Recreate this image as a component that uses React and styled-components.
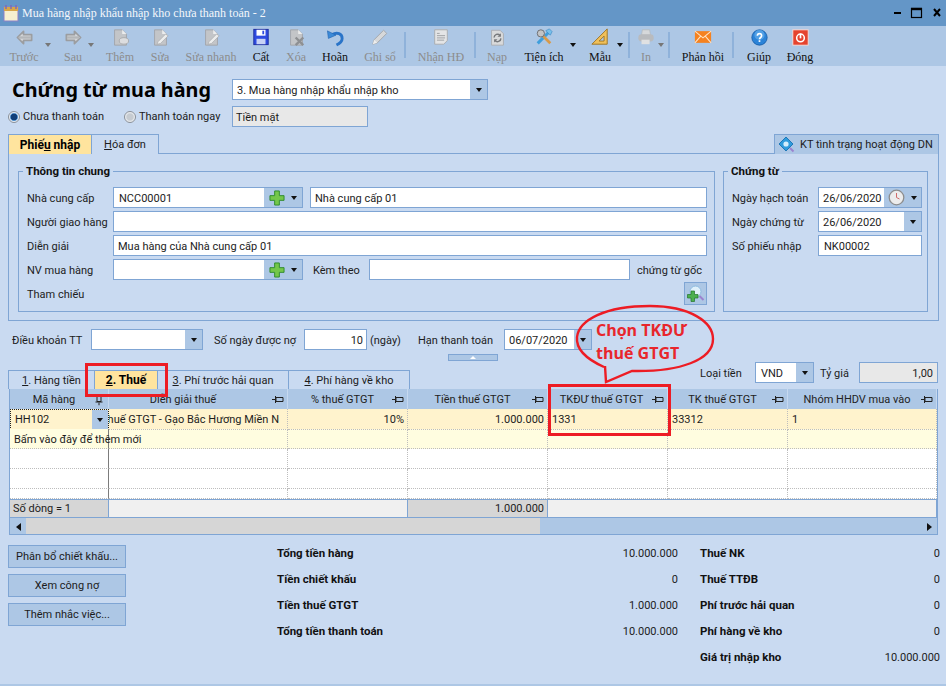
import React from "react";
import styled, { createGlobalStyle } from "styled-components";

const Global = createGlobalStyle`
  html, body { margin: 0; padding: 0; background: #c9daf1; }
  * { box-sizing: border-box; }
`;
const SANS = `Roboto, "Liberation Sans", Arial, sans-serif`;
const SERIF = `"Liberation Serif", "Times New Roman", serif`;
const LINE = "#7fa5d4";
const BTN = "#adc7e5";

const Win = styled.div`
  position: relative; width: 946px; height: 686px; overflow: hidden;
  background: #c9daf1; display: flex; flex-direction: column;
  font: 11px ${SANS}; color: #1c1c1c;
`;
const TitleBar = styled.div`
  height: 26px; background: #6496c7; display: flex; align-items: center;
  padding: 0 4px 0 3px; flex: none;
`;
const TitleText = styled.span`
  font: 12px ${SERIF}; color: #f4f7fb; margin-left: 3px; flex: 1; white-space: nowrap;
`;
const WinBtns = styled.div`display: flex; align-items: center; gap: 8px;`;
const Toolbar = styled.div`
  height: 40px; background: ${BTN}; display: flex; padding-left: 4px; flex: none;
`;
const ToolBtn = styled.div`
  position: relative; width: ${p => p.$w}px; margin-left: ${p => p.$ml || 0}px; flex: none;
  display: flex; flex-direction: column; align-items: center; padding-top: 1px;
  font: 12px ${SERIF}; white-space: nowrap; color: ${p => (p.$off ? "#8c8c8c" : "#111")};
`;
const ToolIcon = styled.div`height: 20px; display: flex; align-items: center; justify-content: center;`;
const ToolLabel = styled.div`margin-top: 3px; line-height: 14px;`;
const ToolCaret = styled.i`
  position: absolute; top: 17px; left: ${p => p.$at}px; width: 0; height: 0;
  border: 3px solid transparent; border-top: 4px solid ${p => (p.$off ? "#777" : "#111")}; border-bottom: 0;
`;
const ToolSep = styled.div`
  width: 2px; height: 26px; margin: 6px 0 0 ${p => p.$ml}px; background: #8fb2da; flex: none;
`;
const HeadRow = styled.div`display: flex; align-items: center; margin-top: 13px; padding-left: 12px; height: 21px;`;
const Heading = styled.h1`
  margin: 0; width: 220px; flex: none; font: bold 19.8px "Noto Sans", ${SANS}; color: #000; white-space: nowrap;
`;
const Combo = styled.div`
  width: ${p => p.$w}px; height: 21px; flex: ${p => (p.$grow ? 1 : "none")}; background: #fff;
  border: 1px solid ${LINE}; display: flex; align-items: stretch; overflow: hidden;
`;
const ComboText = styled.div`
  flex: 1; min-width: 0; padding: 1px 3px 0 ${p => p.$pl || 4}px; line-height: 19px; white-space: nowrap;
  text-align: ${p => (p.$right ? "right" : "left")};
`;
const DropBtn = styled.div`
  width: ${p => p.$w || 17}px; background: ${BTN}; display: flex; align-items: center; justify-content: center;
  gap: 6px; flex: none;
`;
const Caret = styled.i`
  width: 0; height: 0; border: 3.5px solid transparent; border-top: 4px solid #111; border-bottom: 0; display: block;
`;
const PayRow = styled.div`display: flex; align-items: center; margin-top: 6px; padding-left: 8px; height: 21px;`;
const RadioItem = styled.label`
  display: flex; align-items: center; gap: 3px; width: ${p => p.$w}px; flex: none; white-space: nowrap;
`;
const RadioDot = styled.span`
  width: 12px; height: 12px; border-radius: 50%; border: 1px solid #8a9099; flex: none;
  background: ${p => (p.$on
    ? "radial-gradient(circle, #123f78 0 3px, #4a8ac8 3.5px, #e8eef5 4.5px)"
    : "radial-gradient(circle, #c6cbd1 0 3px, #f2f4f6 5px)")};
`;
const ReadBox = styled.div`
  width: ${p => p.$w}px; height: 21px; background: #e8e8e8; border: 1px solid ${LINE};
  padding: 1px ${p => (p.$right ? 4 : 3)}px 0; line-height: 19px; flex: none; text-align: ${p => (p.$right ? "right" : "left")};
`;
const TabStrip = styled.div`
  display: flex; justify-content: space-between; margin: 7px 7px 0 8px; height: 20px; position: relative; z-index: 1;
`;
const TabGroup = styled.div`display: flex;`;
const Tab = styled.div`
  width: ${p => p.$w}px; height: ${p => p.$h || 20}px; border: 1px solid ${LINE}; border-left-width: ${p => (p.$first ? 1 : 0)}px;
  border-bottom: 0; background: ${p => (p.$on ? "#ffe49e" : "#c9daf1")}; font-weight: ${p => (p.$on ? 700 : 400)};
  font-size: ${p => (p.$on ? 12 : 11)}px; color: ${p => (p.$on ? "#000" : "#1c1c1c")};
  display: flex; align-items: center; justify-content: center; white-space: nowrap; flex: none;
`;
const CheckTab = styled.div`
  width: 165px; height: 20px; background: ${BTN}; border: 1px solid ${LINE}; border-bottom: 0;
  display: flex; align-items: center; gap: 5px; padding-left: 3px; white-space: nowrap;
`;
const Panel = styled.div`
  margin: -1px 7px 0 8px; height: 168px; border: 1px solid ${LINE}; border-top-width: 1px;
  padding: 10px 10px 8px 9px; display: flex; gap: 8px;
`;
const Group = styled.fieldset`
  margin: 0; width: ${p => p.$w}px; height: 148px; flex: none; border: 1px solid ${LINE};
  padding: 9px ${p => p.$pr}px 0 8px; min-width: 0; display: flex; flex-direction: column; gap: 3px;
`;
const Legend = styled.legend`
  font: bold 11.5px ${SANS}; line-height: 14px; color: #111; padding: 0 3px; margin-left: -4px;
`;
const FieldRow = styled.div`display: flex; align-items: center; height: ${p => p.$h || 21}px; margin-top: ${p => p.$mt || 0}px;`;
const FieldLabel = styled.div`
  width: ${p => p.$w || 86}px; margin-left: ${p => p.$ml || 0}px; flex: none; white-space: nowrap; padding-top: 1px;
`;
const TopButton = styled.div`
  margin-left: auto; width: 23px; height: 23px; background: ${BTN}; border: 1px solid ${LINE};
  display: flex; align-items: center; justify-content: center;
`;
const TermsRow = styled.div`display: flex; align-items: center; height: 21px; margin-top: 8px; padding-left: 12px;`;
const Collapse = styled.div`
  margin: 4px 0 0 448px; width: 50px; height: 7px; background: ${BTN}; border: 1px solid ${LINE};
  display: flex; align-items: center; justify-content: center;
`;
const UpTri = styled.i`
  width: 0; height: 0; border: 3px solid transparent; border-bottom: 3px solid #fff; border-top: 0; display: block;
`;
const GridTabsRow = styled.div`
  display: flex; justify-content: space-between; height: 27px; margin: 1px 8px 0 8px; align-items: flex-start;
`;
const GridTabs = styled.div`display: flex; align-self: flex-end;`;
const CurrencyBox = styled.div`display: flex; align-items: center; height: 21px;`;
const DataGrid = styled.div`
  margin: 0 8px 0 9px; height: 146px; border: 1px solid ${LINE}; border-top: 0;
  display: flex; flex-direction: column; background: #fff; overflow: hidden;
`;
const COLS = "99px 179px 120px 140px 120px 120px 1fr";
const GridRow = styled.div`
  display: grid; grid-template-columns: ${COLS}; height: ${p => p.$h}px; flex: none; background: ${p => p.$bg};
`;
const HeadCell = styled.div`
  position: relative; border-right: 1px solid #c5d8ef; display: flex; align-items: center; justify-content: center;
  white-space: nowrap; padding: 1px ${p => p.$pr || 10}px 0 0; color: #222;
`;
const PinIcon = styled.svg`
  position: absolute; right: 3px; top: 6px; transform: ${p => (p.$down ? "rotate(-90deg)" : "none")};
`;
const Cell = styled.div`
  position: relative; border-right: 1px ${p => (p.$frozen ? "solid #7c7c7c" : "dotted #bdbdbd")};
  border-bottom: 1px dotted #bdbdbd; display: flex; align-items: center; white-space: nowrap;
  padding: 1px ${p => p.$pr || 3}px 0 4px; overflow: ${p => (p.$over ? "visible" : "hidden")};
  justify-content: ${p => (p.$end ? "flex-end" : "flex-start")};
`;
const EditCell = styled.div`
  border: 1px dotted #222; display: flex; align-items: stretch; background: #fff3cd;
  line-height: 19px; padding-left: 4px; white-space: nowrap; justify-content: space-between;
`;
const FootCell = styled.div`
  background: ${p => (p.$on ? "#d6d6d6" : "#f0f0f0")}; border-right: 1px solid ${LINE}; border-top: 1px solid ${LINE};
  display: flex; align-items: center; padding: 0 3px; justify-content: ${p => (p.$end ? "flex-end" : "flex-start")};
  grid-column: span ${p => p.$span || 1};
`;
const ScrollBar = styled.div`
  height: 18px; flex: none; background: ${BTN}; border-top: 1px solid ${LINE}; display: flex; align-items: center;
`;
const ScrollEnd = styled.div`width: 16px; flex: none; display: flex; justify-content: center;`;
const ScrollThumb = styled.div`width: 514px; height: 100%; background: #d6d6d6; flex: none;`;
const ScrollRest = styled.div`flex: 1;`;
const SideTri = styled.i`
  width: 0; height: 0; border: 4px solid transparent; display: block;
  ${p => (p.$right ? "border-left: 5px solid #111; border-right: 0;" : "border-right: 5px solid #111; border-left: 0;")}
`;
const Bottom = styled.div`display: flex; padding: 10px 6px 0 8px;`;
const Actions = styled.div`width: 269px; flex: none; display: flex; flex-direction: column; gap: 6px;`;
const ActionBtn = styled.div`
  width: 118px; height: 23px; background: ${BTN}; border: 1px solid ${LINE};
  display: flex; align-items: center; justify-content: center; white-space: nowrap;
`;
const Summary = styled.div`
  width: ${p => p.$w}px; margin-left: ${p => p.$ml || 0}px; flex: none;
  display: flex; flex-direction: column; gap: 10px;
`;
const SumRow = styled.div`display: flex; justify-content: space-between; height: 16px; align-items: center;`;
const SumLabel = styled.b`font-weight: 700; font-size: 11.5px; color: #111;`;
const Strip = styled.div`margin-top: auto; height: 2px; background: ${BTN}; flex: none;`;
const RedBox = styled.div`
  position: absolute; left: ${p => p.$x}px; top: ${p => p.$y}px; width: ${p => p.$w}px; height: ${p => p.$h}px;
  border: 3px solid #ed1c24; pointer-events: none; z-index: 5;
`;
const Bubble = styled.svg`position: absolute; left: 570px; top: 300px; z-index: 5;`;
const BubbleText = styled.div`
  position: absolute; left: 596px; top: 319px; z-index: 6; width: 110px;
  font: bold 16px/22.5px "Open Sans", ${SANS}; color: #e8262c; white-space: nowrap;
`;

const S = ({ size = 17, children }) => <svg width={size} height={size} viewBox="0 0 20 20">{children}</svg>;
const G2 = "#d5d7da", G3 = "#9b9da0";

const ArrowL = () => (
  <S size={19}><path d="M9 3.5 2.5 10 9 16.500V13h8.500V7H9z" fill={G2} stroke={G3} strokeWidth="1.8" strokeLinejoin="round" /><path d="M4 10h13" stroke="#b4b6b9" strokeWidth="2.500" /></S>
);
const ArrowR = () => (
  <S size={19}><path d="M11 3.5 17.500 10 11 16.500V13H2.500V7H11z" fill={G2} stroke={G3} strokeWidth="1.8" strokeLinejoin="round" /><path d="M3 10h13" stroke="#b4b6b9" strokeWidth="2.500" /></S>
);
const DocBase = ({ children }) => (
  <S><path d="M3 1h9l5 5v13H3z" fill="#c3c5c8" stroke="#9fa2a6" /><path d="M12 1v5h5z" fill="#eceded" />{children}</S>
);
const DocPlus = () => <DocBase><ellipse cx="14" cy="14" rx="5.500" ry="3.800" fill="#dcdddf" stroke="#a4a6a9" /></DocBase>;
const DocPen = () => <DocBase><path d="M7 15l9-9 3 2-9 9-4 1z" fill="#eceded" stroke="#a8aaad" strokeWidth=".8" /></DocBase>;
const DocX = () => <DocBase><path d="M9 10l9 9M18 10l-9 9" stroke="#8e9093" strokeWidth="2.800" /></DocBase>;
const Save = () => (
  <S size={18}>
    <rect x="2" y="1.500" width="16" height="17" fill="#2e4be0" stroke="#1a2a9a" />
    <rect x="5" y="2" width="10" height="6.500" fill="#fff" />
    <rect x="5" y="12" width="10" height="6" fill="#c9d3f5" />
    <rect x="11.500" y="3" width="2" height="4" fill="#2e4be0" />
  </S>
);
const Undo = () => (
  <S size={19}>
    <path d="M6 7c6-3 11-1 11 4 0 3-2 5-6 7" fill="none" stroke="#2a74c8" strokeWidth="3" />
    <path d="M1.500 3l1 8 8-3.500z" fill="#3c8ad8" stroke="#1f62ad" strokeWidth=".6" />
  </S>
);
const Pencil = () => (
  <S size={18}><path d="M2 18l1.500-5L14 2.500l3.500 3.500L7 16.500z" fill="#d6d8da" stroke="#a3a5a8" /><path d="M2 18l1.500-5 3.500 3.500z" fill="#eee" /></S>
);
const LinedDoc = () => (
  <S size={18}>
    <path d="M3 2h14v12l-4 4H3z" fill="#e4e5e6" stroke="#a8aaad" />
    <path d="M5.500 6h3M5.500 8.500h9M5.500 11h9M5.500 13.500h8" stroke="#9a9c9f" />
  </S>
);
const Reload = () => (
  <S>
    <path d="M3 1.500h10l4 4V19H3z" fill="#d9dadb" stroke="#a8aaad" />
    <path d="M6 10a4 4 0 0 1 7-2.500M14 11a4 4 0 0 1-7 2.500" fill="none" stroke="#77797c" strokeWidth="1.700" />
    <path d="M14 5v4h-4M6 16v-4h4" fill="#77797c" />
  </S>
);
const Tools = () => (
  <S size={18}>
    <path d="M3 17 15 5" stroke="#3f9fdc" strokeWidth="3.400" />
    <path d="M12 3l5 5 2-4-3-3z" fill="#79c0ea" stroke="#2d7fbc" strokeWidth=".6" />
    <path d="M17 17 7 7" stroke="#d89a4a" strokeWidth="3" />
    <circle cx="6.500" cy="6" r="4" fill="#c2c4c6" stroke="#66686b" />
  </S>
);
const Ruler = () => (
  <S size={18}>
    <path d="M18 1v17H1z" fill="#f0c05a" stroke="#9c6f1c" />
    <path d="M14.500 9v5.500H9z" fill="#b0c9e6" stroke="#9c6f1c" />
  </S>
);
const Printer = () => (
  <S size={18}>
    <path d="M6 2h8l1 6H5z" fill="#d6d8da" stroke="#b3b5b8" strokeWidth=".7" />
    <rect x="1.500" y="7" width="17" height="8" rx="3.500" fill="#b9bbbe" />
    <rect x="5" y="13" width="9" height="5" fill="#e0e1e2" />
  </S>
);
const Mail = () => (
  <S size={18}>
    <rect x="1" y="3.500" width="18" height="13" fill="#f58220" />
    <path d="M1 3.500l9 7.500 9-7.500M1 16.500l6.500-7.500M19 16.500 12.500 9" fill="none" stroke="#ffe3c4" strokeWidth="1.200" />
  </S>
);
const Help = () => (
  <S>
    <circle cx="10" cy="10" r="9" fill="#2b83d8" stroke="#155ca8" />
    <circle cx="10" cy="7" r="6" fill="#6cb4ee" opacity=".6" />
    <path d="M7.500 8c0-3.500 5-3.500 5 0 0 2-2.500 2-2.500 4" fill="none" stroke="#fff" strokeWidth="1.900" />
    <rect x="9" y="13.200" width="2" height="2" fill="#fff" />
  </S>
);
const Power = () => (
  <S>
    <rect x="1" y="1" width="18" height="18" fill="#e5432e" stroke="#fbe3dd" />
    <circle cx="10" cy="10.500" r="4.500" fill="none" stroke="#fff" strokeWidth="1.800" />
    <path d="M10 5.500v5.500" stroke="#fff" strokeWidth="2" />
  </S>
);
const Plus = () => (
  <svg width="16" height="16" viewBox="0 0 17 17">
    <path d="M6 1h5v5h5v5h-5v5H6v-5H1V6h5z" fill="#74c74a" stroke="#2d8a2a" />
  </svg>
);
const Clock = () => (
  <svg width="17" height="17" viewBox="0 0 17 17">
    <circle cx="8.500" cy="8.500" r="7.300" fill="#ececec" stroke="#8d8d8d" strokeWidth="1.300" />
    <path d="M8.500 4v4.500l3 1.500" fill="none" stroke="#d06a6a" />
  </svg>
);
const InfoIcon = () => (
  <svg width="17" height="17" viewBox="0 0 17 17">
    <path d="M8 1l7 7-7 7-7-7z" fill="#2f9bdc" stroke="#1f78b8" />
    <circle cx="8" cy="8" r="2.600" fill="#d4eefc" />
    <path d="M12 12l3.500 3.500" stroke="#9b83cf" strokeWidth="2" />
  </svg>
);
const SearchPlus = () => (
  <svg width="19" height="19" viewBox="0 0 19 19">
    <circle cx="9.500" cy="7.500" r="5.500" fill="#dff0fa" stroke="#8cbbe0" />
    <path d="M13.500 12l4 4" stroke="#9b83cf" strokeWidth="2" />
    <path d="M5 7h3.500v3.500H12V14H8.500v3.500H5V14H1.500v-3.500H5z" fill="#4cb050" stroke="#24762a" strokeWidth=".7" />
  </svg>
);
const Pin = ({ down }) => (
  <PinIcon $down={down} width="12" height="9" viewBox="0 0 12 9">
    <path d="M0 4.500h3M3.500 1v7M4 2.500h7v4H4z" fill="none" stroke="#222" />
  </PinIcon>
);
const AppIcon = () => (
  <svg width="16" height="18" viewBox="0 0 16 18">
    <rect x="1" y="3" width="14" height="14" fill="#f6f0d0" stroke="#8b80c8" />
    <rect x="1" y="3" width="14" height="4" fill="#d7a648" />
    <path d="M3 1v4M8 1v4M13 1v4" stroke="#7a6ab8" strokeWidth="1.400" />
  </svg>
);

const tools = [
  { label: "Trước", w: 40, off: 1, icon: <ArrowL />, caret: 41 },
  { label: "Sau", w: 38, ml: 10, off: 1, icon: <ArrowR />, caret: 34 },
  { label: "Thêm", w: 40, ml: 8, off: 1, icon: <DocPlus /> },
  { label: "Sửa", w: 40, off: 1, icon: <DocPen /> },
  { label: "Sửa nhanh", w: 56, ml: 3, off: 1, icon: <DocPen /> },
  { label: "Cất", w: 36, ml: 4, icon: <Save /> },
  { label: "Xóa", w: 34, off: 1, icon: <DocX /> },
  { label: "Hoãn", w: 36, ml: 4, icon: <Undo /> },
  { label: "Ghi sổ", w: 40, ml: 7, off: 1, icon: <Pencil /> },
  { sep: 1, ml: 4 },
  { label: "Nhận HĐ", w: 50, ml: 10, off: 1, icon: <LinedDoc /> },
  { sep: 1, ml: 8 },
  { label: "Nạp", w: 34, ml: 4, off: 1, icon: <Reload /> },
  { label: "Tiện ích", w: 44, ml: 8, icon: <Tools />, caret: 48 },
  { label: "Mẫu", w: 30, ml: 19, icon: <Ruler />, caret: 32 },
  { sep: 1, ml: 13 },
  { label: "In", w: 24, ml: 4, off: 1, icon: <Printer />, caret: 24 },
  { sep: 1, ml: 10 },
  { label: "Phản hồi", w: 46, ml: 10, icon: <Mail /> },
  { sep: 1, ml: 6 },
  { label: "Giúp", w: 34, ml: 8, icon: <Help /> },
  { label: "Đóng", w: 34, ml: 7, icon: <Power /> },
];

const U = styled.span`text-decoration: underline;`;

export default function App() {
  return (
    <Win>
      <Global />
      <TitleBar>
        <AppIcon />
        <TitleText>Mua hàng nhập khẩu nhập kho chưa thanh toán - 2</TitleText>
        <WinBtns>
          <svg width="50" height="12" viewBox="0 0 50 12">
            <path d="M2 6h7" stroke="#000" strokeWidth="2" />
            <rect x="19.500" y="1.500" width="10" height="9" fill="none" stroke="#000" strokeWidth="1.200" />
            <path d="M19 2h11" stroke="#000" strokeWidth="2.400" />
            <path d="M42 2l6 7M48 2l-6 7" stroke="#000" strokeWidth="2" />
          </svg>
        </WinBtns>
      </TitleBar>
      <Toolbar>
        {tools.map((t, i) =>
          t.sep ? (
            <ToolSep key={i} $ml={t.ml} />
          ) : (
            <ToolBtn key={i} $w={t.w} $ml={t.ml} $off={t.off}>
              <ToolIcon>{t.icon}</ToolIcon>
              <ToolLabel>{t.label}</ToolLabel>
              {t.caret && <ToolCaret $at={t.caret} $off={t.off} />}
            </ToolBtn>
          )
        )}
      </Toolbar>

      <HeadRow>
        <Heading>Chứng từ mua hàng</Heading>
        <Combo $w={256}>
          <ComboText>3. Mua hàng nhập khẩu nhập kho</ComboText>
          <DropBtn><Caret /></DropBtn>
        </Combo>
      </HeadRow>
      <PayRow>
        <RadioItem $w={116}><RadioDot $on />Chưa thanh toán</RadioItem>
        <RadioItem $w={108}><RadioDot />Thanh toán ngay</RadioItem>
        <ReadBox $w={136}>Tiền mặt</ReadBox>
      </PayRow>

      <TabStrip>
        <TabGroup>
          <Tab $w={84} $first $on>Phiế<U>u</U>&nbsp;nhập</Tab>
          <Tab $w={67}><U>H</U>óa đơn</Tab>
        </TabGroup>
        <CheckTab><InfoIcon />KT tình trạng hoạt động DN</CheckTab>
      </TabStrip>
      <Panel>
        <Group $w={697} $pr={7}>
          <Legend>Thông tin chung</Legend>
          <FieldRow>
            <FieldLabel>Nhà cung cấp</FieldLabel>
            <Combo $w={190}>
              <ComboText $pl={5}>NCC00001</ComboText>
              <DropBtn $w={38}><Plus /><Caret /></DropBtn>
            </Combo>
            <FieldLabel $w={7} />
            <Combo $grow><ComboText>Nhà cung cấp 01</ComboText></Combo>
          </FieldRow>
          <FieldRow>
            <FieldLabel>Người giao hàng</FieldLabel>
            <Combo $grow />
          </FieldRow>
          <FieldRow>
            <FieldLabel>Diễn giải</FieldLabel>
            <Combo $grow><ComboText>Mua hàng của Nhà cung cấp 01</ComboText></Combo>
          </FieldRow>
          <FieldRow>
            <FieldLabel>NV mua hàng</FieldLabel>
            <Combo $w={190}>
              <ComboText />
              <DropBtn $w={38}><Plus /><Caret /></DropBtn>
            </Combo>
            <FieldLabel $w={56} $ml={10}>Kèm theo</FieldLabel>
            <Combo $w={261} />
            <FieldLabel $w={70} $ml={7}>chứng từ gốc</FieldLabel>
          </FieldRow>
          <FieldRow $h={23} $mt={-1}>
            <FieldLabel>Tham chiếu</FieldLabel>
            <TopButton><SearchPlus /></TopButton>
          </FieldRow>
        </Group>
        <Group $w={205} $pr={5}>
          <Legend>Chứng từ</Legend>
          <FieldRow>
            <FieldLabel>Ngày hạch toán</FieldLabel>
            <Combo $w={104}>
              <ComboText>26/06/2020</ComboText>
              <DropBtn $w={37}><Clock /><Caret /></DropBtn>
            </Combo>
          </FieldRow>
          <FieldRow>
            <FieldLabel>Ngày chứng từ</FieldLabel>
            <Combo $w={104}>
              <ComboText>26/06/2020</ComboText>
              <DropBtn><Caret /></DropBtn>
            </Combo>
          </FieldRow>
          <FieldRow>
            <FieldLabel>Số phiếu nhập</FieldLabel>
            <Combo $w={104}><ComboText $pl={5}>NK00002</ComboText></Combo>
          </FieldRow>
        </Group>
      </Panel>

      <TermsRow>
        <FieldLabel $w={79}>Điều khoản TT</FieldLabel>
        <Combo $w={112}><ComboText /><DropBtn><Caret /></DropBtn></Combo>
        <FieldLabel $w={90} $ml={11}>Số ngày được nợ</FieldLabel>
        <Combo $w={63}><ComboText $right>10</ComboText></Combo>
        <FieldLabel $w={48} $ml={3}>(ngày)</FieldLabel>
        <FieldLabel $w={86}>Hạn thanh toán</FieldLabel>
        <Combo $w={88}><ComboText>06/07/2020</ComboText><DropBtn><Caret /></DropBtn></Combo>
      </TermsRow>
      <Collapse><UpTri /></Collapse>

      <GridTabsRow>
        <GridTabs>
          <Tab $w={87} $h={19} $first><U>1</U>. Hàng tiền</Tab>
          <Tab $w={63} $h={19} $on><U>2</U>. Thuế</Tab>
          <Tab $w={131} $h={19}><U>3</U>. Phí trước hải quan</Tab>
          <Tab $w={121} $h={19}><U>4</U>. Phí hàng về kho</Tab>
        </GridTabs>
        <CurrencyBox>
          <FieldLabel $w={55}>Loại tiền</FieldLabel>
          <Combo $w={59}><ComboText $pl={5}>VND</ComboText><DropBtn><Caret /></DropBtn></Combo>
          <FieldLabel $w={39} $ml={6}>Tỷ giá</FieldLabel>
          <ReadBox $w={79} $right>1,00</ReadBox>
        </CurrencyBox>
      </GridTabsRow>

      <DataGrid>
        <GridRow $h={20} $bg={BTN}>
          <HeadCell>Mã hàng<Pin down /></HeadCell>
          <HeadCell $pr={30}>Diễn giải thuế<Pin /></HeadCell>
          <HeadCell>% thuế GTGT<Pin /></HeadCell>
          <HeadCell>Tiền thuế GTGT<Pin /></HeadCell>
          <HeadCell $pr={12}>TKĐƯ thuế GTGT<Pin /></HeadCell>
          <HeadCell>TK thuế GTGT<Pin /></HeadCell>
          <HeadCell>Nhóm HHDV mua vào<Pin /></HeadCell>
        </GridRow>
        <GridRow $h={20} $bg="#fff3cd">
          <EditCell>HH102<DropBtn $w={16}><Caret /></DropBtn></EditCell>
          <Cell $end $pr={8}>Thuế GTGT - Gạo Bắc Hương Miền N</Cell>
          <Cell $end>10%</Cell>
          <Cell $end>1.000.000</Cell>
          <Cell>1331</Cell>
          <Cell>33312</Cell>
          <Cell>1</Cell>
        </GridRow>
        <GridRow $h={20} $bg="#fffde0">
          <Cell $over $frozen>Bấm vào đây để thêm mới</Cell>
          <Cell /><Cell /><Cell /><Cell /><Cell /><Cell />
        </GridRow>
        {[20, 20, 10].map((h, i) => (
          <GridRow key={i} $h={h} $bg="#fff">
            <Cell $frozen /><Cell /><Cell /><Cell /><Cell /><Cell /><Cell />
          </GridRow>
        ))}
        <GridRow $h={18} $bg="#f0f0f0">
          <FootCell $on>Số dòng = 1</FootCell>
          <FootCell $span={2} />
          <FootCell $on $end>1.000.000</FootCell>
          <FootCell $span={3} />
        </GridRow>
        <ScrollBar>
          <ScrollEnd><SideTri /></ScrollEnd>
          <ScrollThumb />
          <ScrollRest />
          <ScrollEnd><SideTri $right /></ScrollEnd>
        </ScrollBar>
      </DataGrid>

      <Bottom>
        <Actions>
          <ActionBtn>Phân bổ chiết khấu...</ActionBtn>
          <ActionBtn>Xem công nợ</ActionBtn>
          <ActionBtn>Thêm nhắc việc...</ActionBtn>
        </Actions>
        <Summary $w={401}>
          <SumRow><SumLabel>Tổng tiền hàng</SumLabel><span>10.000.000</span></SumRow>
          <SumRow><SumLabel>Tiền chiết khấu</SumLabel><span>0</span></SumRow>
          <SumRow><SumLabel>Tiền thuế GTGT</SumLabel><span>1.000.000</span></SumRow>
          <SumRow><SumLabel>Tổng tiền thanh toán</SumLabel><span>10.000.000</span></SumRow>
        </Summary>
        <Summary $w={240} $ml={22}>
          <SumRow><SumLabel>Thuế NK</SumLabel><span>0</span></SumRow>
          <SumRow><SumLabel>Thuế TTĐB</SumLabel><span>0</span></SumRow>
          <SumRow><SumLabel>Phí trước hải quan</SumLabel><span>0</span></SumRow>
          <SumRow><SumLabel>Phí hàng về kho</SumLabel><span>0</span></SumRow>
          <SumRow><SumLabel>Giá trị nhập kho</SumLabel><span>10.000.000</span></SumRow>
        </Summary>
      </Bottom>
      <Strip />

      <RedBox $x={85} $y={363} $w={83} $h={34} />
      <RedBox $x={548} $y={384} $w={123} $h={52} />
      <Bubble width="150" height="90" viewBox="570 300 150 90">
        <path
          d="M604 367C584 358 576 347 577 337C579 320 605 306 650 306C690 306 713 322 713 339C713 360 680 372 632 371L606 382L605 366"
          fill="none" stroke="#ed1c24" strokeWidth="2.400"
        />
      </Bubble>
      <BubbleText>Chọn TKĐƯ<br />thuế GTGT</BubbleText>
    </Win>
  );
}
